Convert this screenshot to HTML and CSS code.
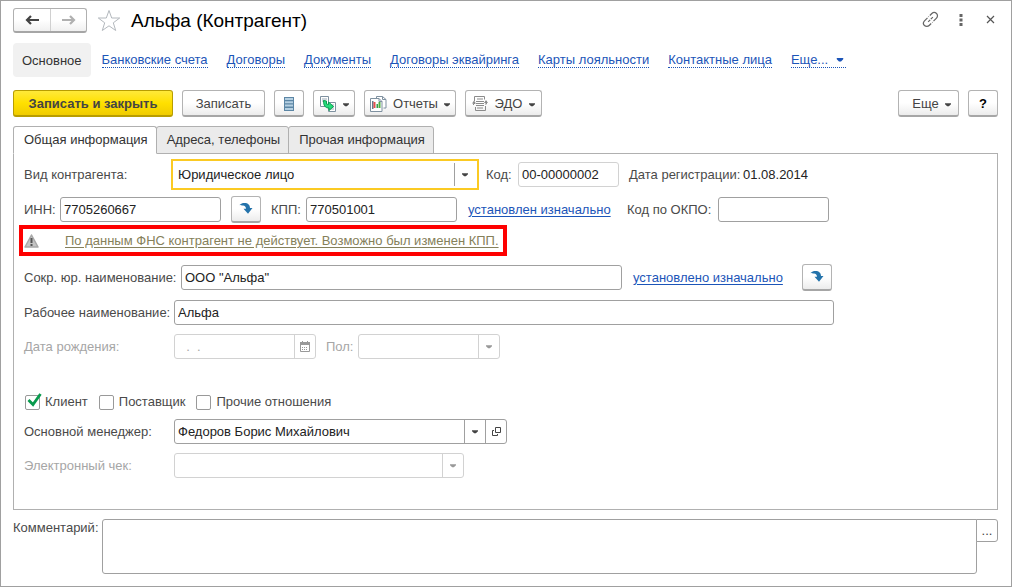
FILE: index.html
```html
<!DOCTYPE html>
<html lang="ru">
<head>
<meta charset="utf-8">
<meta name="viewport" content="width=device-width, initial-scale=1">
<title>Альфа (Контрагент)</title>
<link rel="stylesheet" href="styles.css">
</head>
<body>
<svg class="defs" aria-hidden="true">
  <symbol id="arrow" viewBox="0 0 7 4"><path d="M0 0h7v1L4.500 3.500h-2L0 1z" fill="currentColor"/></symbol>
  <symbol id="fetch" viewBox="0 0 14 12"><path d="M.5 2C2.500.300 4 0 5.500 0c3.500 0 5.500 2 5.500 5h2.500L9 10.800 4.500 5.800H7C7 3.800 5.800 2.800 4 2.500 2.800 2.300 1.500 2.500.5 2z" fill="#2473ab"/></symbol>
</svg>
<main class="window">
  <header class="titlebar">
    <div class="history">
      <button type="button" class="history-btn" aria-label="Назад"><svg width="14" height="10" viewBox="0 0 14 10"><path d="M14 5H3M6 1L2 5l4 4" fill="none" stroke="#444" stroke-width="2.200"/></svg></button>
      <button type="button" class="history-btn" aria-label="Вперед"><svg width="14" height="10" viewBox="0 0 14 10"><path d="M0 5h11M8 1l4 4-4 4" fill="none" stroke="#b0b0b0" stroke-width="2.200"/></svg></button>
    </div>
    <button type="button" class="plain star" aria-label="Избранное"><svg width="24" height="23" viewBox="0 0 24 23"><path d="M12 1.500l2.700 7.500h8l-6.400 4.800 2.400 7.700-6.700-4.700-6.700 4.700 2.400-7.700L1.300 9h8z" fill="#fff" stroke="#b3b8bd"/></svg></button>
    <h1 class="title">Альфа (Контрагент)</h1>
    <div class="window-tools">
      <button type="button" class="plain" aria-label="Ссылка"><svg width="17" height="17" viewBox="0 0 18 18"><g transform="rotate(-45 9 9)" fill="none" stroke="#666" stroke-width="1.300"><path d="M8 5.500H3.500a3.500 3.500 0 0 0 0 7H6.500M10 5.500h-.5M8 12.500h.5M10 12.500h4.500a3.500 3.500 0 0 0 0-7H11.500M5.500 9h3M9.500 9h3"/></g></svg></button>
      <button type="button" class="plain" aria-label="Меню"><svg width="4" height="12" viewBox="0 0 4 12"><path d="M.5 0h3v3h-3zM.5 4.500h3v3h-3zM.5 9h3v3h-3z" fill="#666"/></svg></button>
      <button type="button" class="plain close" aria-label="Закрыть"><svg width="9" height="9" viewBox="0 0 9 9"><path d="M1 1l7 7M8 1L1 8" stroke="#555" stroke-width="1.200"/></svg></button>
    </div>
  </header>

  <nav class="nav">
    <span class="nav-current">Основное</span>
    <a class="nav-link" href="#">Банковские счета</a>
    <a class="nav-link" href="#">Договоры</a>
    <a class="nav-link" href="#">Документы</a>
    <a class="nav-link" href="#">Договоры эквайринга</a>
    <a class="nav-link" href="#">Карты лояльности</a>
    <a class="nav-link" href="#">Контактные лица</a>
    <a class="nav-link nav-more" href="#">Еще... <svg width="8" height="4" viewBox="0 0 7 4"><use href="#arrow"/></svg></a>
  </nav>

  <div class="toolbar">
    <button type="button" class="btn btn-primary">Записать и закрыть</button>
    <button type="button" class="btn btn-save">Записать</button>
    <button type="button" class="btn btn-icon" aria-label="Список"><svg width="10" height="14" viewBox="0 0 10 14"><path d="M0 0h10v14H0z" fill="#5c86a5"/><path d="M1 1h8v2H1zM1 4.300h8v2H1zM1 7.600h8v2H1zM1 11h8v2H1z" fill="#b5d0e2"/></svg></button>
    <button type="button" class="btn btn-based" aria-label="Создать на основании"><svg width="16" height="16" viewBox="0 0 16 16"><path d="M.5.500h8v10h-8zM8.500 6.500h7v9h-7z" fill="#fff" stroke="#7f91a0"/><path d="M2 3h5M2 5h3M10 9h4M10 11h4M10 13h4" stroke="#9babb8"/><path d="M3.500 4.500l3 .5v3l2 .5V6l5 4.500-4.500 4v-2.500c-4 0-5.500-2.500-5.500-7.500z" fill="#25db7a" stroke="#0b9d50"/></svg><svg class="caret" width="6" height="4"><use href="#arrow"/></svg></button>
    <button type="button" class="btn btn-reports"><svg width="17" height="16" viewBox="0 0 17 16"><path d="M6.500 3V.500h6l3.500 3v8.500h-2.500" fill="#fff" stroke="#7f91a0"/><path d="M12.500.500v3h3.500" fill="none" stroke="#7f91a0"/><path d="M.5 2.500h8.500l3 3v10H.5z" fill="#fff" stroke="#7f91a0"/><path d="M9 2.500v3h3" fill="none" stroke="#7f91a0"/><path d="M2 5h1.500v8H2z" fill="#66798a"/><path d="M3.500 6h2v6h-2z" fill="#e3504c"/><path d="M6.500 8h1.500v4H6.500z" fill="#2d9f50"/><path d="M8.500 6h2v6h-2z" fill="#4eae3c"/></svg><span>Отчеты</span><svg class="caret" width="6" height="4"><use href="#arrow"/></svg></button>
    <button type="button" class="btn btn-edo"><svg width="16" height="15" viewBox="0 0 16 15"><path d="M2.500 5V.500h10v3M3.500 11v3.500h10V10" fill="none" stroke="#8b8b8b"/><path d="M5 3h6M4 5.500h8M4 7.500h8M4 9.500h8M5 12h6" stroke="#8b8b8b"/><path d="M1.500 9V7.500H3M14.500 5.500V8H13" fill="none" stroke="#8b8b8b"/><path d="M0 7.500L2 4.500l2 3zM12 7l2-3 2 3z" fill="#8b8b8b"/></svg><span>ЭДО</span><svg class="caret" width="6" height="4"><use href="#arrow"/></svg></button>
    <button type="button" class="btn btn-more"><span>Еще</span><svg class="caret" width="6" height="4"><use href="#arrow"/></svg></button>
    <button type="button" class="btn btn-icon btn-help">?</button>
  </div>

  <div class="tabs" role="tablist">
    <button type="button" class="tab tab-active" role="tab" aria-selected="true">Общая информация</button>
    <button type="button" class="tab" role="tab" aria-selected="false">Адреса, телефоны</button>
    <button type="button" class="tab" role="tab" aria-selected="false">Прочая информация</button>
  </div>

  <section class="panel">
    <div class="row row-kind">
      <label class="label w-kind" for="kind">Вид контрагента:</label>
      <div class="combo combo-focus f-kind">
        <select id="kind"><option>Юридическое лицо</option></select>
        <span class="drop"><svg width="6" height="4"><use href="#arrow"/></svg></span>
      </div>
      <label class="label w-code" for="code">Код:</label>
      <input class="input input-light f-code" id="code" type="text" value="00-00000002" readonly>
      <span class="label w-reg">Дата регистрации:</span>
      <span class="value">01.08.2014</span>
    </div>

    <div class="row row-inn">
      <label class="label w-inn" for="inn">ИНН:</label>
      <input class="input f-inn" id="inn" type="text" value="7705260667">
      <button type="button" class="btn btn-icon btn-fetch" aria-label="Заполнить по ИНН"><svg width="14" height="12"><use href="#fetch"/></svg></button>
      <label class="label w-kpp" for="kpp">КПП:</label>
      <input class="input f-kpp" id="kpp" type="text" value="770501001">
      <a class="link link-kpp" href="#">установлен изначально</a>
      <label class="label w-okpo" for="okpo">Код по ОКПО:</label>
      <input class="input f-okpo" id="okpo" type="text">
    </div>

    <div class="warning">
      <svg width="15" height="14" viewBox="0 0 15 14"><path d="M7.500 1L14 13H1z" fill="#c4c4c4" stroke="#a8a8a8" stroke-width="1.500" stroke-linejoin="round"/><path d="M6.500 4h2v5h-2zM6.500 10h2v2h-2z" fill="#555"/></svg>
      <a class="warning-link" href="#">По данным ФНС контрагент не действует. Возможно был изменен КПП.</a>
    </div>

    <div class="row row-short">
      <label class="label w-short" for="short">Сокр. юр. наименование:</label>
      <input class="input f-short" id="short" type="text" value="ООО &quot;Альфа&quot;">
      <a class="link link-short" href="#">установлено изначально</a>
      <button type="button" class="btn btn-icon btn-fetch" aria-label="Заполнить наименование"><svg width="14" height="12"><use href="#fetch"/></svg></button>
    </div>

    <div class="row row-name">
      <label class="label w-main" for="name">Рабочее наименование:</label>
      <input class="input f-name" id="name" type="text" value="Альфа">
    </div>

    <div class="row row-birth">
      <label class="label label-off w-main" for="birth">Дата рождения:</label>
      <div class="combo combo-off f-birth">
        <input id="birth" type="text" value="  .  ." disabled>
        <button type="button" class="side" aria-label="Календарь" disabled><svg width="10" height="11" viewBox="0 0 10 11"><path d="M.5 1.500h9v9h-9z" fill="#fff" stroke="#999"/><path d="M0 1h10v3H0zM2 0h1v1H2zM7 0h1v1H7z" fill="#999"/><path d="M2 6.500h6M2 8.500h6" stroke="#999" stroke-dasharray="1 1"/></svg></button>
      </div>
      <label class="label label-off w-sex" for="sex">Пол:</label>
      <div class="combo combo-off f-sex">
        <select id="sex" disabled><option></option></select>
        <span class="drop"><svg width="6" height="4"><use href="#arrow"/></svg></span>
      </div>
    </div>

    <div class="row row-roles">
      <label class="check"><input type="checkbox" checked><svg class="tick" width="15" height="14" viewBox="0 0 15 14"><path d="M1.500 7l4.500 4.500L13.500 1" fill="none" stroke="#089a4d" stroke-width="2.800"/></svg>Клиент</label>
      <label class="check"><input type="checkbox">Поставщик</label>
      <label class="check"><input type="checkbox">Прочие отношения</label>
    </div>

    <div class="row row-manager">
      <label class="label w-main" for="manager">Основной менеджер:</label>
      <div class="combo f-manager">
        <select id="manager"><option>Федоров Борис Михайлович</option></select>
        <span class="drop"><svg width="6" height="4"><use href="#arrow"/></svg></span>
        <button type="button" class="side" aria-label="Открыть"><svg width="9" height="9" viewBox="0 0 9 9"><path d="M3.500.500h5v5h-5zM2 3.500H.500v5h5V7" fill="none" stroke="#444"/></svg></button>
      </div>
    </div>

    <div class="row row-receipt">
      <label class="label label-off w-main" for="receipt">Электронный чек:</label>
      <div class="combo combo-off f-receipt">
        <select id="receipt" disabled><option></option></select>
        <span class="drop"><svg width="6" height="4"><use href="#arrow"/></svg></span>
      </div>
    </div>
  </section>

  <div class="comment">
    <label class="label comment-label" for="comment">Комментарий:</label>
    <textarea class="comment-text" id="comment"></textarea>
    <button type="button" class="comment-more">...</button>
  </div>
</main>
</body>
</html>
```

FILE: styles.css
```css
* {
  box-sizing: border-box;
}

body {
  margin: 0;
  background: #fff;
}

body,
button,
input,
select,
textarea {
  font-family: "Liberation Sans", Arial, sans-serif;
  font-size: 13px;
  line-height: 16px;
}

button,
input,
select,
textarea {
  margin: 0;
  padding: 0;
  color: #222;
}

svg {
  display: block;
  flex: none;
}

.defs {
  position: absolute;
  width: 0;
  height: 0;
}

.window {
  display: flex;
  flex-direction: column;
  min-height: 100vh;
  padding: 7px 13px 12px 12px;
  border: 1px solid #a0a0a0;
}

/* Title bar */
.titlebar {
  display: flex;
  align-items: center;
  height: 25px;
}

.history {
  display: flex;
  height: 25px;
  border: 1px solid #b0b0b0;
  border-bottom: 2px solid #a6a6a6;
  border-radius: 3px;
  background: linear-gradient(#fff 50%, #f0f0f0);
}

.history-btn {
  display: flex;
  align-items: center;
  justify-content: center;
  width: 36px;
  border: 0;
  background: none;
}

.history-btn + .history-btn {
  border-left: 1px solid #d0d0d0;
}

.plain {
  display: flex;
  border: 0;
  background: none;
}

.star {
  margin-left: 10px;
}

.title {
  margin: 0 0 0 10px;
  color: #000;
  font-size: 19px;
  font-weight: 400;
  line-height: 24px;
}

.window-tools {
  display: flex;
  align-items: center;
  gap: 20px;
  margin: 0 3px 2px auto;
}

.close {
  padding-left: 3px;
}

/* Section navigation */
.nav {
  display: flex;
  align-items: center;
  gap: 19px;
  margin-top: 10px;
}

.nav-current {
  margin-right: -8px;
  padding: 10px 9px 8px;
  border-radius: 4px;
  background: #f1f1f1;
  color: #333;
}

.nav-link {
  padding-top: 1px;
  border-bottom: 1px dotted #1c55b8;
  color: #1c55b8;
  line-height: 14px;
  text-decoration: none;
  white-space: nowrap;
}

.nav-more {
  display: flex;
  align-items: center;
  gap: 8px;
  padding-right: 2px;
}

/* Buttons */
.toolbar {
  display: flex;
  gap: 9px;
  margin-top: 13px;
}

.btn {
  display: flex;
  align-items: center;
  justify-content: center;
  height: 27px;
  padding-top: 1px;
  border: 1px solid #b3b3b3;
  border-bottom: 2px solid #a6a6a6;
  border-radius: 3px;
  background: linear-gradient(#fff 50%, #ececec);
  color: #444;
}

.caret {
  margin-top: 2px;
  color: #444;
}

.btn-primary {
  width: 160px;
  border-color: #b89d00;
  background: linear-gradient(#ffe93a, #ffe000 50%, #f0cc00);
  font-weight: 700;
}

.btn-save {
  width: 83px;
}

.btn-icon {
  width: 30px;
}

.btn-fetch {
  padding-top: 0;
}

.btn-based {
  gap: 7px;
  width: 42px;
}

.btn-reports {
  gap: 6px;
  width: 92px;
}

.btn-edo {
  gap: 7px;
  width: 77px;
}

.btn-more {
  gap: 6px;
  width: 61px;
  margin-left: auto;
  padding-left: 6px;
}

.btn-help {
  color: #000;
  font-weight: 700;
}

/* Tabs */
.tabs {
  display: flex;
  margin-top: 9px;
}

.tab {
  height: 28px;
  margin: 0 -1px -1px 0;
  padding: 0 8px 0 10px;
  border: 1px solid #b0b0b0;
  border-radius: 3px 3px 0 0;
  background: #ebebeb;
  color: #333;
}

.tab-active {
  z-index: 1;
  border-bottom-color: #fff;
  background: #fff;
}

.panel {
  flex: 1;
  padding: 5px 10px 31px;
  border: 1px solid #b0b0b0;
}

/* Form rows */
.row {
  display: flex;
  align-items: center;
}

.label {
  flex: none;
  color: #4a4a4a;
  white-space: nowrap;
}

.label-off {
  color: #a6a6a6;
}

.value {
  color: #222;
}

.input {
  height: 25px;
  padding: 0 3px;
  border: 1px solid #a0a0a0;
  border-radius: 3px;
  background: #fff;
}

.input-light {
  border-color: #d2d2d2;
}

.combo {
  display: flex;
  height: 25px;
  overflow: hidden;
  border: 1px solid #a0a0a0;
  border-radius: 3px;
  background: #fff;
}

.combo select,
.combo input {
  flex: 1;
  min-width: 0;
  padding: 0 3px;
  border: 0;
  background: none;
  appearance: none;
  white-space: pre;
}

.combo input:disabled {
  padding-left: 4px;
  color: #a6a6a6;
}

.drop,
.side {
  display: flex;
  flex: none;
  align-items: center;
  justify-content: center;
  width: 21px;
  border: 0;
  border-left: 1px solid #a0a0a0;
  background: none;
  color: #444;
  pointer-events: none;
}

.side {
  pointer-events: auto;
}

.combo-off {
  border-color: #d2d2d2;
}

.combo-off .drop,
.combo-off .side {
  border-color: #d2d2d2;
  color: #999;
}

.combo-focus {
  height: 31px;
  padding: 2px;
  border: 2px solid #fbca23;
  border-radius: 0;
}

.link {
  color: #1c55b8;
  text-underline-offset: 2px;
  white-space: nowrap;
}

.w-kind {
  width: 147px;
}

.f-kind {
  width: 308px;
  margin-right: 7px;
}

.w-code {
  width: 32px;
}

.f-code {
  width: 101px;
  margin-right: 10px;
}

.w-reg {
  width: 114px;
}

.row-inn {
  margin-top: 6px;
}

.w-inn {
  width: 36px;
}

.f-inn {
  width: 161px;
  margin-right: 10px;
}

.w-kpp {
  width: 35px;
  margin-left: 10px;
}

.f-kpp {
  width: 151px;
  margin-right: 11px;
}

.link-kpp {
  width: 159px;
}

.w-okpo {
  width: 91px;
}

.f-okpo {
  width: 111px;
}

.warning {
  display: flex;
  align-items: center;
  gap: 26px;
  width: fit-content;
  height: 31px;
  margin: 2px 0 0 -5px;
  padding: 1px 4px 0 1px;
  border: 4px solid #fe0000;
}

.warning-link {
  color: #85805a;
  text-underline-offset: 2px;
}

.row-short {
  margin-top: 8px;
}

.w-short {
  width: 157px;
}

.f-short {
  width: 441px;
  margin-right: 11px;
}

.link-short {
  width: 169px;
}

.row-name {
  margin-top: 9px;
}

.w-main {
  width: 150px;
}

.f-name {
  width: 660px;
}

.row-birth {
  margin-top: 9px;
}

.f-birth {
  width: 142px;
  margin-right: 10px;
}

.w-sex {
  width: 32px;
}

.f-sex {
  width: 142px;
}

.row-roles {
  gap: 10px;
  margin-top: 35px;
}

.check {
  display: flex;
  position: relative;
  align-items: center;
  gap: 5px;
  padding-left: 1px;
  color: #4a4a4a;
}

.check input {
  width: 15px;
  height: 15px;
  border: 1px solid #999;
  border-radius: 2px;
  background: #fff;
  appearance: none;
}

.tick {
  position: absolute;
  top: -1px;
  left: 3px;
  pointer-events: none;
}

.row-manager {
  margin-top: 9px;
}

.f-manager {
  width: 333px;
}

.row-receipt {
  margin-top: 9px;
}

.f-receipt {
  width: 290px;
}

/* Comment */
.comment {
  display: flex;
  align-items: flex-start;
  margin-top: 9px;
}

.comment-label {
  width: 89px;
  padding-top: 1px;
}

.comment-text {
  flex: 1;
  height: 55px;
  padding: 3px;
  border: 1px solid #a0a0a0;
  border-radius: 3px 0 3px 3px;
  resize: none;
}

.comment-more {
  width: 22px;
  height: 23px;
  margin-left: -1px;
  border: 1px solid #a0a0a0;
  border-radius: 0 3px 3px 0;
  background: #fff;
  color: #444;
}
```
